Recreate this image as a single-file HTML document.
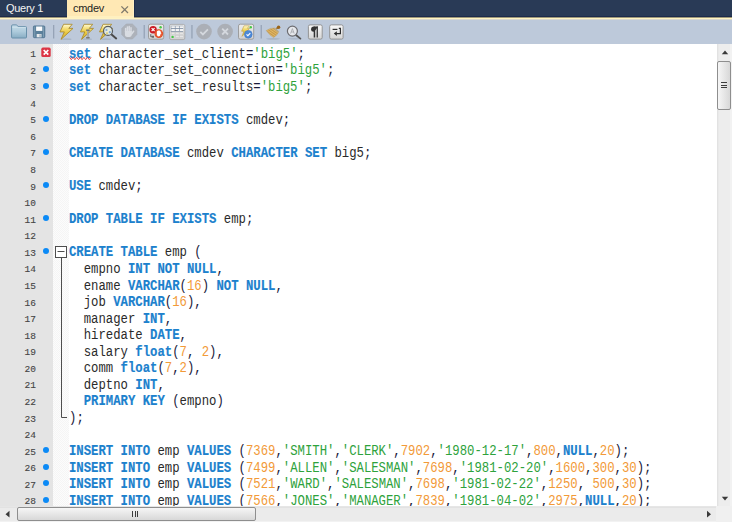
<!DOCTYPE html>
<html><head><meta charset="utf-8">
<style>
*{margin:0;padding:0;box-sizing:border-box}
html,body{width:732px;height:522px;overflow:hidden;background:#fff}
body{position:relative;font-family:"Liberation Sans",sans-serif}
#tabs{position:absolute;left:0;top:0;width:732px;height:17px;background:#293a56;border-bottom:1px solid #1c2a4a}
#tabline{position:absolute;left:0;top:17px;width:732px;height:3px;background:linear-gradient(#9d977a 0 1px,#fff3c3 1px 2px,#dad8cd 2px 3px)}
.tab{position:absolute;top:0;height:17px;font-size:11px;line-height:17px;white-space:nowrap;letter-spacing:-0.3px}
#t1{left:0;width:67px;color:#f4f4f4;padding-left:6px}
#t2{left:67px;width:67px;height:17px;background:#ffe8b4;color:#1e1e1e;padding-left:6px;border-right:1px solid #fff0c4}
#tb{position:absolute;left:0;top:20px;width:732px;height:24px;background:#bdc9da}
#gut{position:absolute;left:0;top:44px;width:53px;height:462px;background:#e4e4e4;overflow:hidden}
#fold{position:absolute;left:53px;top:44px;width:16px;height:462px;background:conic-gradient(#f5f5f5 25%,#fcfcfc 0 50%,#f5f5f5 0 75%,#fcfcfc 0) 0 0/2px 2px}
#code{position:absolute;left:69px;top:44px;width:648px;height:462px;overflow:hidden}
.cl{position:absolute;left:0;height:14px;white-space:pre;font-family:"Liberation Mono",monospace;font-size:12.29px;line-height:14px;color:#2a2a2a;transform:scaleY(1.19);transform-origin:0 0}
.k{color:#1c81cd;font-weight:bold;-webkit-text-stroke:0.15px #1c81cd}
.s{color:#2ea23c}
.n{color:#f29a38}
.p{color:#1a1a3a}
.num{position:absolute;right:17px;height:16px;line-height:16px;font-family:"Liberation Mono",monospace;font-size:9.5px;color:#464646;-webkit-text-stroke:0.12px #464646}
.dot{position:absolute;left:43px;width:6px;height:6px;border-radius:50%;background:#0b8af6}
#vs{position:absolute;left:717px;top:44px;width:15px;height:462px;background:linear-gradient(90deg,#e2e2e2 0 1px,#e9e9e9 1px 2px,#ededed 2px 13px,#f2f2f2 13px)}
#hs{position:absolute;left:0;top:506px;width:716px;height:16px;background:linear-gradient(#e6e6e6 0 1px,#e2e2e2 1px 2px,#ebebeb 2px 15px,#f2f2f2 15px)}
#corner{position:absolute;left:716px;top:506px;width:16px;height:16px;background:#f0f0f0}
#vthumb{position:absolute;left:717px;top:61px;width:14px;height:49px;border:1px solid #8e8e8e;border-radius:2px;background:linear-gradient(90deg,#f6f6f6,#e4e4e4 60%,#d8d8d8)}
#vthumb:after{content:"";position:absolute;left:3px;top:20px;width:6px;height:6px;background:linear-gradient(#3c3c3c 0 1px,transparent 1px 3px,#3c3c3c 3px 4px,transparent 4px 5px,#3c3c3c 5px 6px)}
#hthumb{position:absolute;left:17px;top:507px;width:239px;height:14px;border:1px solid #8e8e8e;border-radius:2px;background:linear-gradient(#f6f6f6,#e4e4e4 60%,#d8d8d8)}
#hthumb:after{content:"";position:absolute;left:114px;top:3px;width:6px;height:6px;background:linear-gradient(90deg,#3c3c3c 0 1px,transparent 1px 3px,#3c3c3c 3px 4px,transparent 4px 5px,#3c3c3c 5px 6px)}
</style></head><body>
<div id="tabs">
 <div class="tab" id="t1">Query 1</div>
 <div class="tab" id="t2">cmdev</div>
</div>
<div id="tabline"></div><div style="position:absolute;left:67px;top:16px;width:67px;height:2px;background:#fff0c0"></div>
<div id="tb"></div>
<svg id="tbsvg" width="732" height="24" viewBox="0 20 732 24" style="position:absolute;left:0;top:20px">
<defs>
 <linearGradient id="gFold" x1="0" y1="0" x2="0" y2="1"><stop offset="0" stop-color="#c6dde9"/><stop offset="0.5" stop-color="#aecbdc"/><stop offset="1" stop-color="#88adc4"/></linearGradient>
 <linearGradient id="gBolt" x1="0" y1="0" x2="0" y2="1"><stop offset="0" stop-color="#fffbd8"/><stop offset="0.3" stop-color="#f4dc70"/><stop offset="0.6" stop-color="#e6c43c"/><stop offset="1" stop-color="#d8b84a"/></linearGradient>
 <linearGradient id="gBtn" x1="0" y1="0" x2="0" y2="1"><stop offset="0" stop-color="#fafafa"/><stop offset="1" stop-color="#d4d4d4"/></linearGradient>
 <linearGradient id="gSq" x1="0" y1="0" x2="0" y2="1"><stop offset="0" stop-color="#ececec"/><stop offset="1" stop-color="#d2d2d2"/></linearGradient>
 <radialGradient id="gMag" cx="0.5" cy="0.5" r="0.5"><stop offset="0" stop-color="#f4f0d0"/><stop offset="1" stop-color="#cfe0ea"/></radialGradient>
 <linearGradient id="gBroom" x1="0" y1="0" x2="1" y2="1"><stop offset="0" stop-color="#e8c888"/><stop offset="1" stop-color="#b88a48"/></linearGradient>
</defs>
<!-- folder -->
<path d="M11.6 37.2 V26 q0-1.1 1.1-1.1 h3.6 q0.7 0 1 0.6 l0.6 1 h7.6 q1 0 1 1 V37.2 q0 0.8-0.8 0.8 H12.4 q-0.8 0-0.8-0.8z" fill="url(#gFold)" stroke="#6890aa" stroke-width="1"/>
<path d="M12.2 27.3 h13.4" stroke="#d2e4ee" stroke-width="0.8"/>
<!-- save -->
<rect x="33.4" y="25.9" width="11.4" height="11.8" rx="1" fill="#5b809b" stroke="#4f7490" stroke-width="0.8"/>
<rect x="34.2" y="26.6" width="1" height="10.4" fill="#7d9db4"/>
<rect x="43" y="26.6" width="1" height="10.4" fill="#7d9db4"/>
<rect x="36.1" y="26.5" width="6.2" height="4.4" fill="#fbfcfd"/>
<rect x="36.7" y="34" width="4.8" height="3.3" fill="#e6e9ec"/>
<rect x="39.4" y="34.5" width="1.3" height="2.3" fill="#9aabb8"/>
<!-- separator -->
<rect x="53" y="25" width="1.3" height="13.5" fill="#96a3b6"/>
<!-- bolt 1 -->
<g id="bolt">
<ellipse cx="66.5" cy="39.2" rx="5" ry="0.9" fill="#a3afc0" opacity="0.7"/>
<path d="M63.6 24.3 H72.2 L68.8 28.4 H73 L61 39.4 L64.3 31.9 H60 Z" fill="url(#gBolt)" stroke="#a8892c" stroke-width="0.85" stroke-linejoin="round"/>
</g>
<!-- bolt 2 -->
<g transform="translate(20.5 0)">
<ellipse cx="66.5" cy="39.2" rx="5" ry="0.9" fill="#a3afc0" opacity="0.7"/>
<path d="M63.6 24.3 H72.2 L68.8 28.4 H73 L61 39.4 L64.3 31.9 H60 Z" fill="url(#gBolt)" stroke="#a8892c" stroke-width="0.85" stroke-linejoin="round"/>
</g>
<path d="M86.2 30.2 h3.4 M87.9 30.2 v7.6 M86.2 37.8 h3.4" stroke="#707070" stroke-width="1.5"/>
<path d="M87.9 30.8 v6.4" stroke="#f0f0f0" stroke-width="0.7"/>
<!-- bolt + magnifier -->
<g transform="translate(39.5 0)">
<ellipse cx="66.5" cy="39.2" rx="5" ry="0.9" fill="#a3afc0" opacity="0.7"/>
<path d="M63.6 24.3 H72.2 L68.8 28.4 H73 L61 39.4 L64.3 31.9 H60 Z" fill="url(#gBolt)" stroke="#a8892c" stroke-width="0.85" stroke-linejoin="round"/>
</g>
<path d="M111 34 L116.2 38.4" stroke="#4a4a4a" stroke-width="2" stroke-linecap="round"/>
<circle cx="108" cy="30.9" r="4.5" fill="url(#gMag)" stroke="#585c60" stroke-width="1.2"/>
<circle cx="106.5" cy="30" r="1.1" fill="#80a8d8"/><circle cx="109.8" cy="32.2" r="1.1" fill="#80a8d8"/><circle cx="107" cy="33.2" r="0.9" fill="#d8c860"/>
<!-- stop hand -->
<path d="M126.2 24 h6.2 l4.4 4.4 v6.2 l-4.4 4.4 h-6.2 l-4.4-4.4 v-6.2z" fill="#adb2ba" stroke="#a4a9b1" stroke-width="0.6"/>
<g stroke="#d8dce2" stroke-linecap="round" fill="#d8dce2">
<path d="M125.6 32 V28.6 M127.4 32 V26.9 M129.2 32 V26.6 M131 32 V27.8" stroke-width="1.5"/>
<path d="M131.6 34 L133.6 31.2" stroke-width="1.5"/>
<path d="M124.9 31 h6.9 v3.3 q0 2.6-2.4 2.6 h-2.2 q-2.3 0-2.3-2.6z" stroke="none"/>
</g>
<!-- separator -->
<rect x="143.6" y="25" width="1.3" height="13.5" fill="#96a3b6"/>
<!-- stop on error icon -->
<rect x="148.5" y="24.2" width="15.2" height="15" rx="1.8" fill="url(#gSq)" stroke="#969696" stroke-width="0.9"/>
<path d="M150.8 34.2 v2.6 h3.2 M153 35.6 v2.4" stroke="#404040" stroke-width="0.8" fill="none"/>
<circle cx="153.1" cy="29.7" r="3.7" fill="#cc1a24"/>
<path d="M151.6 28.2 l3 3 M154.6 28.2 l-3 3" stroke="#fff" stroke-width="1.2"/>
<circle cx="158.8" cy="33.6" r="4.3" fill="#e2491e"/>
<circle cx="158.8" cy="33.6" r="3.2" fill="none" stroke="#f07050" stroke-width="0.5"/>
<path d="M156.8 32.2 q0-1.6 1.6-1.6 h0.9 q1.5 0 1.5 1.6 l0.6 1.8 -0.9 -0.2 v0.8 q0 1.8-1.8 1.8 q-1.9 0-1.9-1.8z" fill="#fff"/>
<circle cx="160.6" cy="27.2" r="1.2" fill="#44c844"/>
<!-- grid icon -->
<rect x="169.6" y="24.4" width="15.2" height="15.2" rx="1.5" fill="url(#gSq)" stroke="#a4a4a4" stroke-width="0.8"/>
<rect x="170.8" y="25.8" width="12.4" height="5.9" fill="#7a8aa0"/>
<g fill="#f4f4f4"><rect x="171.3" y="26.2" width="3.6" height="2"/><rect x="175.5" y="26.2" width="3.6" height="2"/><rect x="179.7" y="26.2" width="3.6" height="2"/>
<rect x="171.3" y="29" width="3.6" height="2"/><rect x="175.5" y="29" width="3.6" height="2"/><rect x="179.7" y="29" width="3.6" height="2"/></g>
<g fill="#e6e6e6" stroke="#c8c8c8" stroke-width="0.5"><rect x="171.3" y="32.5" width="3.6" height="2"/><rect x="175.5" y="32.5" width="3.6" height="2"/><rect x="179.7" y="32.5" width="3.6" height="2"/>
<rect x="175.5" y="35.5" width="3.6" height="2"/><rect x="179.7" y="35.5" width="3.6" height="2"/></g>
<circle cx="172.6" cy="36.9" r="1.2" fill="#44c844"/>
<!-- separator -->
<rect x="191.3" y="25" width="1.3" height="13.5" fill="#96a3b6"/>
<!-- check circle -->
<circle cx="204" cy="31.6" r="7.8" fill="#abafb6"/>
<path d="M200.3 31.8 l2.6 2.6 5-5" stroke="#d4d8de" stroke-width="1.8" fill="none"/>
<!-- x circle -->
<circle cx="225.1" cy="31.6" r="7.8" fill="#abafb6"/>
<path d="M222.2 28.7 l5.8 5.8 M228 28.7 l-5.8 5.8" stroke="#d4d8de" stroke-width="1.8"/>
<!-- autocommit -->
<rect x="238.5" y="24.2" width="15.2" height="15" rx="1.8" fill="url(#gSq)" stroke="#969696" stroke-width="0.9"/>
<path d="M244 25.8 H249.4 L247.4 28.4 H249.6 L242 36.4 L244 31.2 H241.6 Z" fill="url(#gBolt)" stroke="#c0a040" stroke-width="0.6"/>
<circle cx="248.3" cy="34.3" r="3.9" fill="#4d8ad8" stroke="#3a72c0" stroke-width="0.5"/>
<path d="M246.5 34.3 l1.4 1.4 2.4-2.5" stroke="#fff" stroke-width="1.1" fill="none"/>
<circle cx="250.8" cy="27.2" r="1.2" fill="#44c844"/>
<!-- separator -->
<rect x="260.6" y="25" width="1.3" height="13.5" fill="#96a3b6"/>
<!-- broom -->
<defs><pattern id="pBroom" width="2" height="2" patternUnits="userSpaceOnUse" patternTransform="rotate(35)"><rect width="2" height="2" fill="#e2b866"/><rect width="2" height="0.7" fill="#b88a3e"/></pattern></defs>
<ellipse cx="273" cy="38.8" rx="7" ry="0.9" fill="#a3afc0" opacity="0.8"/>
<path d="M266.2 30.6 Q270.5 27.4 275.2 28 L278.6 31.6 Q278.3 34.4 273.6 37.6 Q269.5 35.2 266.2 30.6z" fill="url(#pBroom)" stroke="#b8a070" stroke-width="0.5"/>
<path d="M274.6 28.4 L278.2 31.6" stroke="#b4ab94" stroke-width="1.3"/><path d="M276.4 28.6 L278 27.6" stroke="#9a6418" stroke-width="1.4"/>
<circle cx="278.6" cy="27.3" r="1.7" fill="#9a6418"/>
<!-- magnifier A -->
<ellipse cx="294" cy="38.8" rx="6" ry="0.8" fill="#a3afc0" opacity="0.7"/>
<path d="M296 35 L300.4 38.6" stroke="#555" stroke-width="1.8" stroke-linecap="round"/>
<circle cx="292.4" cy="31.1" r="5" fill="#e6e8ec" stroke="#6c6c70" stroke-width="1.2"/>
<path d="M290.6 33.6 l1.8-5 1.8 5 M291.3 32 h2.2" stroke="#9a9ca0" stroke-width="0.7" fill="none"/>
<!-- pilcrow -->
<rect x="308.4" y="24.9" width="13.8" height="14.2" rx="1.6" fill="url(#gBtn)" stroke="#8c8c8c" stroke-width="0.9"/>
<path d="M318.2 26.6 h-4.4 q-2.7 0-2.7 2.6 q0 2.5 2.7 2.5 h0.4z" fill="#333"/>
<rect x="313.7" y="26.6" width="1.5" height="10.9" fill="#333"/>
<rect x="316.6" y="26.6" width="1.3" height="10.9" fill="#333"/>
<!-- wrap -->
<rect x="329.7" y="24.9" width="13.4" height="14.2" rx="1.6" fill="url(#gBtn)" stroke="#8c8c8c" stroke-width="0.9"/>
<path d="M332.6 29.4 h4.8" stroke="#2e2e2e" stroke-width="1.2"/>
<path d="M338.8 28.4 h1.6 v5.2 h-4.2" stroke="#2e2e2e" stroke-width="1.2" fill="none"/>
<path d="M336.8 31.2 l-3 2.4 3 2.4z" fill="#2e2e2e"/>
</svg>

<div id="gut">
<div class="num" style="top:3.10px">1</div>
<div class="num" style="top:19.67px">2</div>
<div class="dot" style="top:22.17px"></div>
<div class="num" style="top:36.23px">3</div>
<div class="dot" style="top:38.73px"></div>
<div class="num" style="top:52.80px">4</div>
<div class="num" style="top:69.36px">5</div>
<div class="dot" style="top:71.86px"></div>
<div class="num" style="top:85.93px">6</div>
<div class="num" style="top:102.49px">7</div>
<div class="dot" style="top:104.99px"></div>
<div class="num" style="top:119.06px">8</div>
<div class="num" style="top:135.62px">9</div>
<div class="dot" style="top:138.12px"></div>
<div class="num" style="top:152.19px">10</div>
<div class="num" style="top:168.75px">11</div>
<div class="dot" style="top:171.25px"></div>
<div class="num" style="top:185.31px">12</div>
<div class="num" style="top:201.88px">13</div>
<div class="dot" style="top:204.38px"></div>
<div class="num" style="top:218.45px">14</div>
<div class="num" style="top:235.01px">15</div>
<div class="num" style="top:251.58px">16</div>
<div class="num" style="top:268.14px">17</div>
<div class="num" style="top:284.71px">18</div>
<div class="num" style="top:301.27px">19</div>
<div class="num" style="top:317.84px">20</div>
<div class="num" style="top:334.40px">21</div>
<div class="num" style="top:350.97px">22</div>
<div class="num" style="top:367.53px">23</div>
<div class="num" style="top:384.10px">24</div>
<div class="num" style="top:400.66px">25</div>
<div class="dot" style="top:403.16px"></div>
<div class="num" style="top:417.23px">26</div>
<div class="dot" style="top:419.73px"></div>
<div class="num" style="top:433.79px">27</div>
<div class="dot" style="top:436.29px"></div>
<div class="num" style="top:450.36px">28</div>
<div class="dot" style="top:452.86px"></div>
</div>
<div id="fold"></div>
<div id="code"><div class="cl" style="top:2px"><span class="k">set</span> character_set_client<span class="p">=</span><span class="s">&#x27;big5&#x27;</span><span class="p">;</span></div>
<div class="cl" style="top:18px"><span class="k">set</span> character_set_connection<span class="p">=</span><span class="s">&#x27;big5&#x27;</span><span class="p">;</span></div>
<div class="cl" style="top:35px"><span class="k">set</span> character_set_results<span class="p">=</span><span class="s">&#x27;big5&#x27;</span><span class="p">;</span></div>
<div class="cl" style="top:51px"></div>
<div class="cl" style="top:68px"><span class="k">DROP</span> <span class="k">DATABASE</span> <span class="k">IF</span> <span class="k">EXISTS</span> cmdev<span class="p">;</span></div>
<div class="cl" style="top:84px"></div>
<div class="cl" style="top:101px"><span class="k">CREATE</span> <span class="k">DATABASE</span> cmdev <span class="k">CHARACTER</span> <span class="k">SET</span> big5<span class="p">;</span></div>
<div class="cl" style="top:118px"></div>
<div class="cl" style="top:134px"><span class="k">USE</span> cmdev<span class="p">;</span></div>
<div class="cl" style="top:151px"></div>
<div class="cl" style="top:167px"><span class="k">DROP</span> <span class="k">TABLE</span> <span class="k">IF</span> <span class="k">EXISTS</span> emp<span class="p">;</span></div>
<div class="cl" style="top:184px"></div>
<div class="cl" style="top:200px"><span class="k">CREATE</span> <span class="k">TABLE</span> emp <span class="p">(</span></div>
<div class="cl" style="top:217px">  empno <span class="k">INT</span> <span class="k">NOT</span> <span class="k">NULL</span><span class="p">,</span></div>
<div class="cl" style="top:234px">  ename <span class="k">VARCHAR</span><span class="p">(</span><span class="n">16</span><span class="p">)</span> <span class="k">NOT</span> <span class="k">NULL</span><span class="p">,</span></div>
<div class="cl" style="top:250px">  job <span class="k">VARCHAR</span><span class="p">(</span><span class="n">16</span><span class="p">)</span><span class="p">,</span></div>
<div class="cl" style="top:267px">  manager <span class="k">INT</span><span class="p">,</span></div>
<div class="cl" style="top:283px">  hiredate <span class="k">DATE</span><span class="p">,</span></div>
<div class="cl" style="top:300px">  salary <span class="k">float</span><span class="p">(</span><span class="n">7</span><span class="p">,</span> <span class="n">2</span><span class="p">)</span><span class="p">,</span></div>
<div class="cl" style="top:316px">  comm <span class="k">float</span><span class="p">(</span><span class="n">7</span><span class="p">,</span><span class="n">2</span><span class="p">)</span><span class="p">,</span></div>
<div class="cl" style="top:333px">  deptno <span class="k">INT</span><span class="p">,</span></div>
<div class="cl" style="top:349px">  <span class="k">PRIMARY</span> <span class="k">KEY</span> <span class="p">(</span>empno<span class="p">)</span></div>
<div class="cl" style="top:366px"><span class="p">)</span><span class="p">;</span></div>
<div class="cl" style="top:383px"></div>
<div class="cl" style="top:399px"><span class="k">INSERT</span> <span class="k">INTO</span> emp <span class="k">VALUES</span> <span class="p">(</span><span class="n">7369</span><span class="p">,</span><span class="s">&#x27;SMITH&#x27;</span><span class="p">,</span><span class="s">&#x27;CLERK&#x27;</span><span class="p">,</span><span class="n">7902</span><span class="p">,</span><span class="s">&#x27;1980-12-17&#x27;</span><span class="p">,</span><span class="n">800</span><span class="p">,</span><span class="k">NULL</span><span class="p">,</span><span class="n">20</span><span class="p">)</span><span class="p">;</span></div>
<div class="cl" style="top:416px"><span class="k">INSERT</span> <span class="k">INTO</span> emp <span class="k">VALUES</span> <span class="p">(</span><span class="n">7499</span><span class="p">,</span><span class="s">&#x27;ALLEN&#x27;</span><span class="p">,</span><span class="s">&#x27;SALESMAN&#x27;</span><span class="p">,</span><span class="n">7698</span><span class="p">,</span><span class="s">&#x27;1981-02-20&#x27;</span><span class="p">,</span><span class="n">1600</span><span class="p">,</span><span class="n">300</span><span class="p">,</span><span class="n">30</span><span class="p">)</span><span class="p">;</span></div>
<div class="cl" style="top:432px"><span class="k">INSERT</span> <span class="k">INTO</span> emp <span class="k">VALUES</span> <span class="p">(</span><span class="n">7521</span><span class="p">,</span><span class="s">&#x27;WARD&#x27;</span><span class="p">,</span><span class="s">&#x27;SALESMAN&#x27;</span><span class="p">,</span><span class="n">7698</span><span class="p">,</span><span class="s">&#x27;1981-02-22&#x27;</span><span class="p">,</span><span class="n">1250</span><span class="p">,</span> <span class="n">500</span><span class="p">,</span><span class="n">30</span><span class="p">)</span><span class="p">;</span></div>
<div class="cl" style="top:449px"><span class="k">INSERT</span> <span class="k">INTO</span> emp <span class="k">VALUES</span> <span class="p">(</span><span class="n">7566</span><span class="p">,</span><span class="s">&#x27;JONES&#x27;</span><span class="p">,</span><span class="s">&#x27;MANAGER&#x27;</span><span class="p">,</span><span class="n">7839</span><span class="p">,</span><span class="s">&#x27;1981-04-02&#x27;</span><span class="p">,</span><span class="n">2975</span><span class="p">,</span><span class="k">NULL</span><span class="p">,</span><span class="n">20</span><span class="p">)</span><span class="p">;</span></div></div>
<div id="vs"></div>
<div id="hs"></div>
<div id="corner"></div>
<svg width="732" height="522" style="position:absolute;left:0;top:0">
<!-- tab close -->
<path d="M121.4 6.4 L128 13 M128 6.4 L121.4 13" stroke="#807a6c" stroke-width="1.3"/>
<rect x="134" y="0" width="1" height="17" fill="#1e2d4c"/>
<!-- red x icon line 1 -->
<rect x="41.3" y="47.6" width="9.4" height="9.4" rx="1.6" fill="#dc3545"/>
<path d="M43.7 50 L48.3 54.6 M48.3 50 L43.7 54.6" stroke="#fff" stroke-width="1.7"/>
<!-- squiggle -->
<path d="M69.5 57.3 L71.3 59.7 L73.1 57.3 L74.9 59.7 L76.7 57.3 L78.5 59.7 L80.3 57.3 L82.1 59.7 L83.9 57.3 L85.7 59.7 L87.5 57.3 L89.3 59.7 L91.1 57.3" stroke="#e24848" stroke-width="1" fill="none"/>
<!-- fold -->
<rect x="55.5" y="246.5" width="11" height="11" fill="#fff" stroke="#4e4e4e" stroke-width="1"/>
<path d="M57.5 251.5 H64.5" stroke="#4e4e4e" stroke-width="1"/>
<path d="M61.5 257.5 V417.5 H67" stroke="#4e4e4e" stroke-width="1" fill="none"/>
<!-- v scrollbar -->
<path d="M721.8 54.3 L725 50.5 L728.2 54.3Z" fill="#3a3a3a"/>
<path d="M721.8 496.8 L728.2 496.8 L725 500.6Z" fill="#3a3a3a"/>
<!-- h scrollbar arrows -->
<path d="M9.5 510.8 L5.5 514.2 L9.5 517.6Z" fill="#3a3a3a"/>
<path d="M707 510.8 L711 514.2 L707 517.6Z" fill="#3a3a3a"/>
</svg>
<div id="vthumb"></div>
<div id="hthumb"></div>

</body></html>
